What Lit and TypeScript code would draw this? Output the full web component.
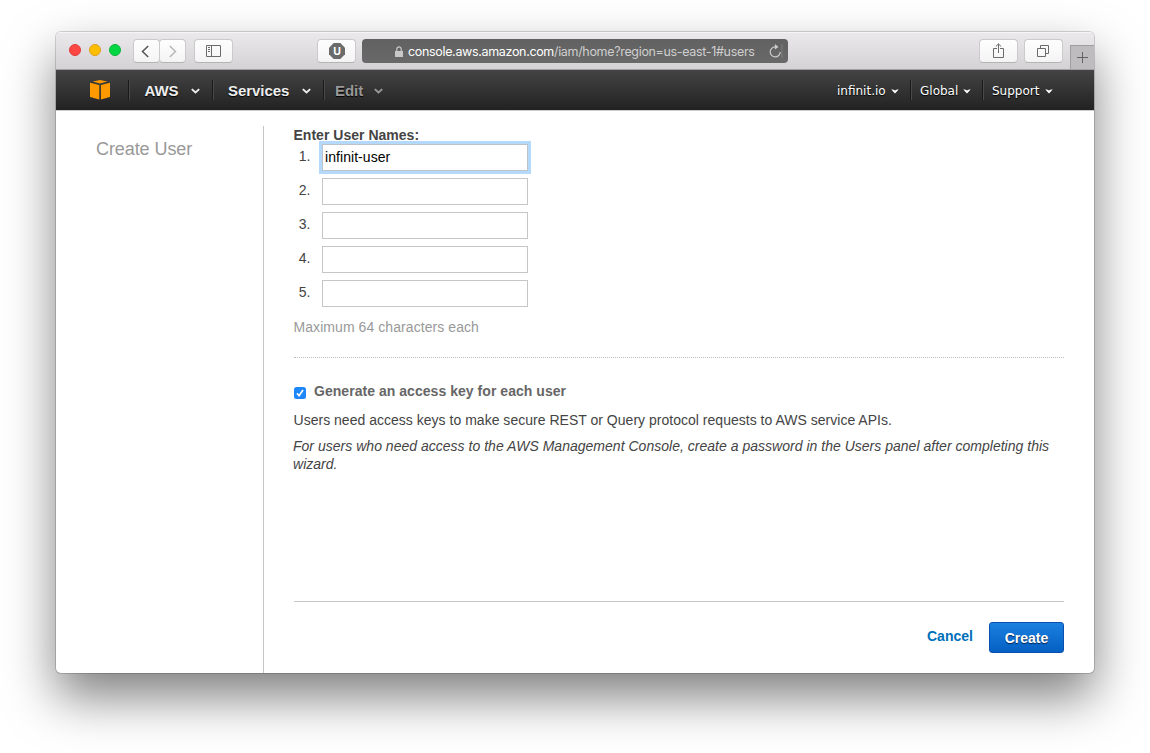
import { LitElement, html, css, svg } from "lit";
import { customElement, property, state } from "lit/decorators.js";
import { classMap } from "lit/directives/class-map.js";

const chevron = () => html`<svg class="chev" width="9" height="6" viewBox="0 0 9 6">
  ${svg`<path d="M0.8 1.1L4.5 4.5L8.2 1.1" fill="none" stroke="currentColor" stroke-width="1.9"/>`}
</svg>`;

const caret = () => html`<svg class="chev" width="8" height="5" viewBox="0 0 8 5">
  ${svg`<path d="M0.3 .5H2L4 1.6L6 .5H7.7L4 4.4Z" fill="currentColor"/>`}
</svg>`;

@customElement("browser-toolbar")
class BrowserToolbar extends LitElement {
  static styles = css`
    :host { display: flex; height: 37px; box-sizing: content-box; border-bottom: 1px solid #a3a1a3;
      background: linear-gradient(#ebe9eb, #d4d2d4); box-shadow: inset 0 1px #f6f5f6;
      font-family: Inter, "Noto Sans", sans-serif; }
    .lights { display: flex; gap: 8px; padding: 12px 0 0 13px; width: 64px; }
    .light { width: 12px; height: 12px; border-radius: 50%; box-sizing: border-box; }
    .red { background: #ff4643; border: 1px solid #e03c3a; }
    .yellow { background: #ffbd00; border: 1px solid #dfa013; }
    .green { background: #00d742; border: 1px solid #0bb53a; }
    .btn { display: flex; align-items: center; justify-content: center; box-sizing: border-box;
      height: 24px; margin-top: 7px; width: 39px; border: 1px solid #cbc9cb; border-bottom-color: #b5b3b5;
      border-radius: 4px; background: linear-gradient(#fefefe, #f4f4f4); }
    .half { width: 27px; }
    .half + .half { margin-left: -1px; }
    .half svg { margin-right: 2px; }
    .half + .half svg { margin-right: 0; }
    .side { margin-left: 8px; }
    .u { margin-left: 84px; }
    .url { display: flex; align-items: center; box-sizing: border-box; margin: 7px 0 0 6px; width: 426px;
      height: 24px; border-radius: 4px; background: linear-gradient(#616161, #696969);
      padding-left: 32px; color: #fff; font-size: 12.5px; }
    .addr { margin-left: 4px; width: 347px; white-space: nowrap; letter-spacing: -0.33px; }
    .path { color: #cfcfcf; }
    .reload { margin-left: 14px; }
    .share { margin-left: 191px; }
    .tabs { margin-left: 6px; }
    .plus { display: flex; align-items: center; justify-content: center; box-sizing: border-box; width: 24px;
      margin: 13px 0 0 7px; height: 24px; border: 1px solid #a09ea0; border-width: 1px 0 0 1px; background: #bebcbe; }
    svg { display: block; }
  `;
  render() {
    return html`
      <div class="lights"><div class="light red"></div><div class="light yellow"></div><div class="light green"></div></div>
      <div class="btn half"><svg width="9" height="13" viewBox="0 0 9 13"><path d="M7.2 1L1.5 6.5L7.2 12" fill="none" stroke="#555" stroke-width="1.5"/></svg></div>
      <div class="btn half"><svg width="9" height="13" viewBox="0 0 9 13"><path d="M1.8 1L7.5 6.5L1.8 12" fill="none" stroke="#b4b4b4" stroke-width="1.4"/></svg></div>
      <div class="btn side"><svg width="15" height="12" viewBox="0 0 15 12"><path d="M.5 .5H14.5V11.5H.5ZM5.5 .5V11.5M2 2.5H4M2 4.5H4M2 6.5H4" fill="none" stroke="#6b6b6b"/></svg></div>
      <div class="btn u"><svg width="16" height="16" viewBox="0 0 16 16"><path d="M4.7 0H11.3L16 4.7V11.3L11.3 16H4.7L0 11.3V4.7Z" fill="#6b6b6b"/><text x="8" y="11.8" text-anchor="middle" font-size="10.5" font-weight="700" fill="#fff">U</text></svg></div>
      <div class="url">
        <svg width="10" height="11" viewBox="0 0 10 11"><path d="M1 5H9V11H1Z" fill="#c8c8c8"/><path d="M2.8 5.5V3.2C2.8 .1 7.2 .1 7.2 3.2V5.5" fill="none" stroke="#c8c8c8" stroke-width="1.2"/></svg>
        <div class="addr">console.aws.amazon.com<span class="path">/iam/home?region=us-east-1#users</span></div>
        <svg class="reload" width="14" height="14" viewBox="0 0 14 14"><path d="M6.8 2.9H6.2A5 5 0 1 0 11.2 8" fill="none" stroke="#ccc" stroke-width="1.2"/><path d="M5.9 0L9.5 2.9L5.9 5.6Z" fill="#ccc"/><path d="M13 0V14" stroke="#858585" stroke-width=".8"/></svg>
      </div>
      <div class="btn share"><svg width="11" height="16" viewBox="0 0 11 16"><path d="M4 5.5H.5V14.5H10.5V5.5H7M5.5 10V1M2.8 3.5L5.5 .9L8.2 3.5" fill="none" stroke="#6b6b6b"/></svg></div>
      <div class="btn tabs"><svg width="13" height="12" viewBox="0 0 13 12"><path d="M.5 3.5H8.5V11.5H.5ZM3.5 3.5V.5H11.5V8.5H8.5" fill="none" stroke="#6b6b6b"/></svg></div>
      <div class="plus"><svg width="11" height="11" viewBox="0 0 11 11"><path d="M5.5 0V11M0 5.5H11" stroke="#636163"/></svg></div>
    `;
  }
}

@customElement("console-nav")
class ConsoleNav extends LitElement {
  static styles = css`
    :host { display: flex; height: 40px; background: linear-gradient(#444, #222); border-bottom: 1px solid #ccc;
      font-family: "Liberation Sans", Arial, sans-serif; color: #eee; }
    .logo { display: block; margin: 10px 0 0 34px; }
    .item { display: flex; align-items: center; justify-content: space-between; box-sizing: border-box; height: 40px;
      padding-top: 1px; font-size: 15px; font-weight: 700; text-shadow: 0 1px 1px #000; white-space: nowrap; letter-spacing: -0.05px; }
    .sep { width: 1px; height: 20px; margin-top: 10px; background: #191919; border-right: 1px solid #4a4a4a; box-sizing: content-box; flex: none; }
    .first { margin-left: 18px; }
    .aws { margin: 0 12px 0 14.5px; width: 55.5px; }
    .services { margin: 0 12px 0 14px; width: 83px; }
    .edit { margin-left: 10px; width: 48px; color: #999; }
    .fill { flex: 1; }
    .small { font-family: "DejaVu Sans", Verdana, sans-serif; font-size: 12px; font-weight: 400; color: #fff; letter-spacing: 0; padding-top: 2px; }
    .acct { width: 62px; margin-right: 11px; }
    .global { width: 51px; margin: 0 11px 0 8px; }
    .support { width: 61px; margin: 0 41px 0 8px; }
    .chev { display: block; }
  `;
  render() {
    return html`
      <svg class="logo" width="20" height="20" viewBox="0 0 20 20"><path d="M2.6 1.5L10 0L17.4 1.5L10 3.6ZM0 2.8L9.3 5V19.4L0 17ZM20 2.8L10.9 5V19.4L20 17Z" fill="#ff9900"/></svg>
      <div class="sep first"></div>
      <div class="item aws"><span>AWS</span>${chevron()}</div>
      <div class="sep"></div>
      <div class="item services"><span>Services</span>${chevron()}</div>
      <div class="sep"></div>
      <div class="item edit"><span>Edit</span>${chevron()}</div>
      <div class="fill"></div>
      <div class="item small acct"><span>infinit.io</span>${caret()}</div>
      <div class="sep"></div>
      <div class="item small global"><span>Global</span>${caret()}</div>
      <div class="sep"></div>
      <div class="item small support"><span>Support</span>${caret()}</div>
    `;
  }
}

@customElement("create-user-form")
class CreateUserForm extends LitElement {
  @property({ type: Array }) names: string[] = ["infinit-user", "", "", "", ""];
  @state() private active = 0;
  static styles = css`
    :host { display: flex; flex-direction: column; box-sizing: border-box; height: 562px; padding: 16px 30px 20px 30.5px;
      font: 14px/18px "Liberation Sans", Arial, sans-serif; color: #444; letter-spacing: 0.018px; }
    .title { font-weight: 700; height: 17px; line-height: 17px; }
    .rows { display: flex; flex-direction: column; gap: 7px; }
    .row { display: flex; }
    .num { width: 17px; margin-right: 11.5px; text-align: right; line-height: 25px; }
    .field { box-sizing: border-box; width: 206px; height: 27px; margin: 0; border: 1px solid #c6c6c6; border-radius: 0;
      padding: 0 2px 2px; font: 14px "Liberation Sans", Arial, sans-serif; letter-spacing: 0.06px; color: #000; background: #fff; outline: none; }
    .focus { box-shadow: 0 0 0 3px #b5d8fd; border-color: #bcc3ca; }
    .hint { color: #999; margin-top: 11px; letter-spacing: 0.07px; }
    .dots { height: 0; border-top: 1px dotted #bbb; margin-top: 21px; }
    .check { display: flex; margin-top: 24px; color: #666; font-weight: 700; letter-spacing: 0.04px; }
    .check svg { display: block; margin: 5px 8px 0 .5px; }
    .p1 { margin: 11px 0 0; white-space: nowrap; }
    .p2 { margin: 8px 0 0 -.5px; font-style: italic; }
    .l { white-space: nowrap; display: block; }
    .foot { display: flex; justify-content: flex-end; margin-top: auto; border-top: 1px solid #c6c6c6; padding-top: 20px; }
    .cancel { color: #0070ba; font-weight: 700; line-height: 28px; margin-right: 16px; }
    .create { box-sizing: border-box; width: 75px; height: 31px; border: 1px solid #0a50ae; border-radius: 3px; text-align: center;
      background: linear-gradient(#1a80e0, #0560c4); color: #fff; font-weight: 700; line-height: 30px; text-shadow: 0 1px 1px #002050; }
  `;
  render() {
    return html`
      <div class="title"><span>Enter User Names:</span></div>
      <div class="rows">${this.names.map((n, i) => html`<div class="row"><div class="num">${i + 1}.</div>
        <input class=${classMap({ field: true, focus: i === this.active })} .value=${n} @focus=${() => (this.active = i)}></div>`)}</div>
      <div class="hint"><span>Maximum 64 characters each</span></div>
      <div class="dots"></div>
      <div class="check"><svg width="12" height="12" viewBox="0 0 12 12"><rect width="12" height="12" rx="2.5" fill="#1e88fa"/><path d="M3 6.4L5.1 8.7L9 3" fill="none" stroke="#fff" stroke-width="1.6"/></svg><span>Generate an access key for each user</span></div>
      <div class="p1"><span>Users need access keys to make secure REST or Query protocol requests to AWS service APIs.</span></div>
      <div class="p2"><span class="l">For users who need access to the AWS Management Console, create a password in the Users panel after completing this</span><span class="l">wizard.</span></div>
      <div class="foot"><div class="cancel">Cancel</div><div class="create">Create</div></div>
    `;
  }
}

@customElement("app-root")
class AppRoot extends LitElement {
  static styles = css`
    :host { display: block; box-sizing: border-box; width: 1150px; height: 753px; padding: 32px 56px 80px; background: #fff; overflow: hidden; }
    .window { height: 641px; border-radius: 5px; background: #fff;
      box-shadow: 0 0 0 1px rgba(0,0,0,.16), 0 24px 50px rgba(0,0,0,.5); }
    .clip { height: 641px; border-radius: 5px; overflow: hidden; }
    .body { display: grid; grid-template-columns: 207px 1fr; height: 562px; }
    .side { margin-top: 15px; border-right: 1px solid #c6c6c6; padding: 12px 0 0 40px; box-sizing: content-box; width: 167px;
      font: 18px/22px "Liberation Sans", Arial, sans-serif; color: #999; letter-spacing: -0.08px; }
  `;
  render() {
    return html`<div class="window"><div class="clip">
      <browser-toolbar></browser-toolbar>
      <console-nav></console-nav>
      <div class="body"><div class="side">Create User</div><create-user-form></create-user-form></div>
    </div></div>`;
  }
}
